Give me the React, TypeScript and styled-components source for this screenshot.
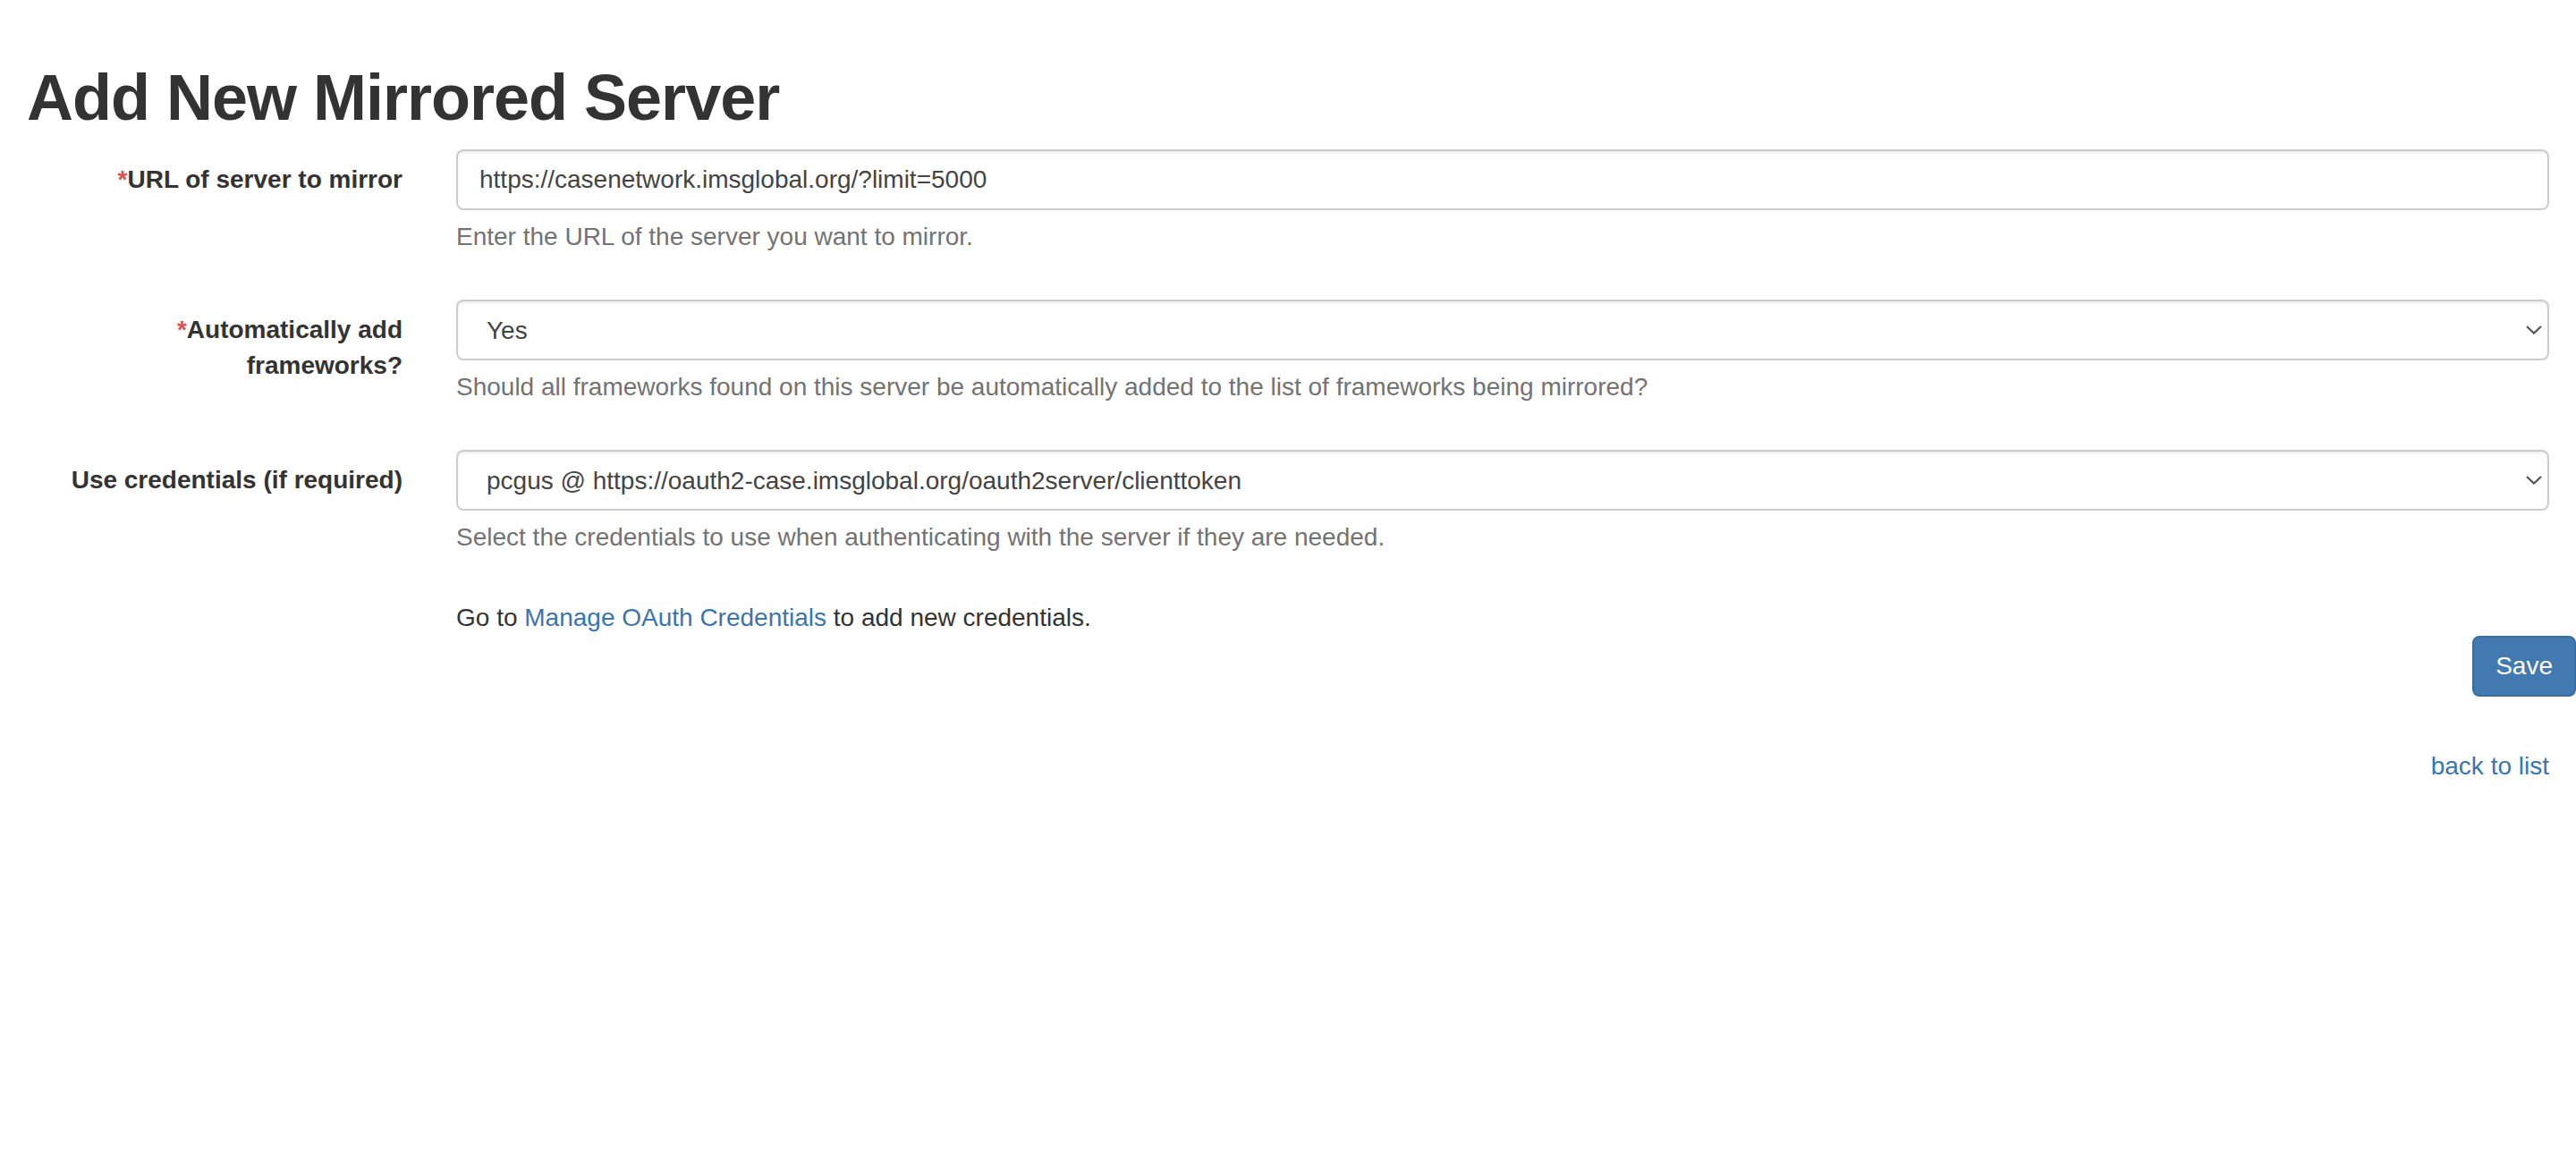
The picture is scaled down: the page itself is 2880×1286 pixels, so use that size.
import React from "react";
import styled, { createGlobalStyle } from "styled-components";

const GlobalStyle = createGlobalStyle`
  html, body {
    margin: 0;
    padding: 0;
    background: #ffffff;
  }
  body {
    font-family: "Liberation Sans", Arial, Helvetica, sans-serif;
    font-size: 28px;
    line-height: 40px;
    color: #333333;
  }
  * { box-sizing: border-box; }
`;

const Page = styled.div`
  padding: 0 30px;
`;

const Title = styled.h1`
  margin: 70px 0 18px;
  font-size: 72px;
  line-height: 79px;
  font-weight: 700;
  letter-spacing: -1px;
  color: #333333;
`;

const Form = styled.form`
  display: flex;
  flex-direction: column;
`;

const FormGroup = styled.div`
  display: grid;
  grid-template-columns: 420px 1fr;
  column-gap: 60px;
  margin-bottom: 30px;
`;

const Label = styled.label`
  text-align: right;
  font-weight: 700;
  padding-top: 14px;
  line-height: 40px;
  color: #333333;
`;

const Required = styled.span`
  color: #d9534f;
`;

const Field = styled.div`
  min-width: 0;
`;

const TextInput = styled.input`
  display: block;
  width: 100%;
  height: 68px;
  padding: 12px 24px;
  border: 2px solid #cccccc;
  border-radius: 8px;
  box-shadow: inset 0 2px 2px rgba(0, 0, 0, 0.075);
  font-family: inherit;
  font-size: 28px;
  line-height: 40px;
  color: #444444;
  background: #ffffff;
  outline: none;
`;

const SelectWrap = styled.div`
  position: relative;
`;

const Select = styled.select`
  display: block;
  width: 100%;
  height: 68px;
  padding: 0 60px 0 32px;
  border: 2px solid #cccccc;
  border-radius: 8px;
  box-shadow: inset 0 2px 2px rgba(0, 0, 0, 0.075);
  font-family: inherit;
  font-size: 28px;
  color: #444444;
  background: #ffffff;
  appearance: none;
  -webkit-appearance: none;
  outline: none;
`;

const Chevron = styled.svg`
  position: absolute;
  right: 8px;
  top: 50%;
  transform: translateY(-50%);
  pointer-events: none;
`;

const Help = styled.p`
  margin: 10px 0 20px;
  color: #737373;
  line-height: 40px;
`;

const Note = styled.p`
  margin: 0;
  padding-left: 480px;
  line-height: 40px;
`;

const Link = styled.a`
  color: #3a75b0;
  text-decoration: none;
`;

const ActionRow = styled.div`
  display: flex;
  justify-content: flex-end;
  margin-right: -30px;
`;

const SaveButton = styled.button`
  height: 68px;
  padding: 0 24px;
  border: 2px solid #3a6ea2;
  border-radius: 8px;
  background: #4279b0;
  color: #ffffff;
  font-family: inherit;
  font-size: 28px;
  line-height: 40px;
  cursor: pointer;
`;

const BackRow = styled.div`
  margin-top: 58px;
  text-align: right;
`;

const ChevronIcon = () => (
  <Chevron width="18" height="10" viewBox="0 0 18 10" aria-hidden="true">
    <path d="M1 1 L9 8.6 L17 1" fill="none" stroke="#555" strokeWidth="2.2" />
  </Chevron>
);

export default function App() {
  return (
    <>
      <GlobalStyle />
      <Page>
        <Title>Add New Mirrored Server</Title>
        <Form onSubmit={(e) => e.preventDefault()}>
          <FormGroup>
            <Label htmlFor="url">
              <Required>*</Required>URL of server to mirror
            </Label>
            <Field>
              <TextInput
                id="url"
                type="text"
                defaultValue="https://casenetwork.imsglobal.org/?limit=5000"
              />
              <Help>Enter the URL of the server you want to mirror.</Help>
            </Field>
          </FormGroup>

          <FormGroup>
            <Label htmlFor="auto">
              <Required>*</Required>Automatically add frameworks?
            </Label>
            <Field>
              <SelectWrap>
                <Select id="auto" defaultValue="yes">
                  <option value="yes">Yes</option>
                  <option value="no">No</option>
                </Select>
                <ChevronIcon />
              </SelectWrap>
              <Help>
                Should all frameworks found on this server be automatically added to the list of frameworks being mirrored?
              </Help>
            </Field>
          </FormGroup>

          <FormGroup>
            <Label htmlFor="cred">Use credentials (if required)</Label>
            <Field>
              <SelectWrap>
                <Select id="cred" defaultValue="pcgus">
                  <option value="pcgus">pcgus @ https://oauth2-case.imsglobal.org/oauth2server/clienttoken</option>
                </Select>
                <ChevronIcon />
              </SelectWrap>
              <Help>Select the credentials to use when authenticating with the server if they are needed.</Help>
            </Field>
          </FormGroup>

          <Note>
            Go to <Link href="#">Manage OAuth Credentials</Link> to add new credentials.
          </Note>

          <ActionRow>
            <SaveButton type="submit">Save</SaveButton>
          </ActionRow>
        </Form>

        <BackRow>
          <Link href="#">back to list</Link>
        </BackRow>
      </Page>
    </>
  );
}
